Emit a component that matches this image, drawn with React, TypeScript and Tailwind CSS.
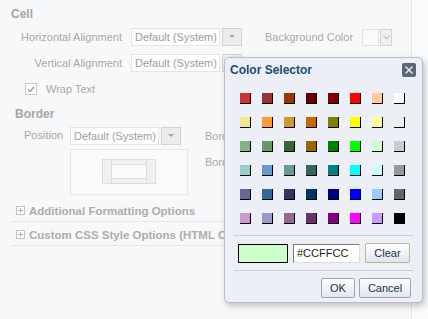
import React from 'react'

const swatches = [
  ['#cc3333', '#993333', '#993300', '#660000', '#800000', '#ff0000', '#ffcc99', '#ffffff'],
  ['#f0e68c', '#ff9933', '#cc9933', '#cc6600', '#808000', '#ffff00', '#ffff99', '#eeeeee'],
  ['#80b380', '#669966', '#336633', '#996600', '#008000', '#00ff00', '#ccffcc', '#cccccc'],
  ['#99cccc', '#6699cc', '#669999', '#336666', '#008080', '#00ffff', '#ccffff', '#999999'],
  ['#666699', '#336699', '#333366', '#003366', '#000080', '#0000ff', '#99ccff', '#666666'],
  ['#cc99cc', '#9999cc', '#996699', '#663366', '#800080', '#ff00ff', '#cc99ff', '#000000'],
]

function Select() {
  return (
    <div className="flex h-[18px] w-[111px] shrink-0">
      <div className="flex-1 border border-[#e4e4e4] bg-white px-[3px] text-[11px] leading-[16px] text-[#9c9c9c] whitespace-nowrap overflow-hidden">
        Default (System)
      </div>
      <div className="ml-[2px] flex w-[20px] items-center justify-center border border-[#d2d2d2] bg-[#ececec]">
        <svg width="6" height="4" viewBox="0 0 6 4">
          <path d="M0 0h6L3 3z" fill="#a8a8a8" />
        </svg>
      </div>
    </div>
  )
}

function Plus() {
  return (
    <div className="flex h-[9px] w-[9px] items-center justify-center border border-[#c4c4c4] bg-white">
      <svg width="5" height="5" viewBox="0 0 5 5">
        <path d="M0 2.5h5M2.5 0v5" stroke="#b0b0b0" strokeWidth="1" />
      </svg>
    </div>
  )
}

function DlgButton({ label, className }: { label: string; className: string }) {
  return (
    <button
      className={`h-[20px] rounded-[2px] border bg-gradient-to-b from-white to-[#e2e6ed] text-[11px] leading-[18px] text-[#15314f] ${className}`}
    >
      {label}
    </button>
  )
}

export default function App() {
  return (
    <div
      className="relative h-[319px] w-[428px] overflow-hidden bg-[#f9fafb]"
      style={{ fontFamily: '"Liberation Sans", Arial, sans-serif' }}
    >
      {/* faded property panel */}
      <div className="h-full w-[412px] border-r border-[#e3e5e9] bg-[#f7f8fa] pl-[11px] pt-[7px] text-[11px] text-[#a8a8a8]">
        <div className="text-[12px] font-bold leading-[14px] text-[#a6a6a6]">Cell</div>

        <div className="mt-[7px] flex items-center">
          <div className="w-[111px] text-right">Horizontal Alignment</div>
          <div className="ml-[9px]">
            <Select />
          </div>
          <div className="ml-[23px]">Background Color</div>
          <div className="ml-[9px] h-[17px] w-[17px] border border-[#e2e2e2] bg-[#fafafa]" />
          <div className="ml-[1px] flex h-[17px] w-[12px] items-center justify-center border border-[#d2d2d2] bg-[#efefef]">
            <svg width="7" height="5" viewBox="0 0 7 5">
              <path d="M0.5 0.5L3.5 4L6.5 0.5" fill="none" stroke="#aaa" />
            </svg>
          </div>
        </div>

        <div className="mt-[8px] flex items-center">
          <div className="w-[111px] text-right">Vertical Alignment</div>
          <div className="ml-[9px]">
            <Select />
          </div>
        </div>

        <div className="mt-[9px] flex items-center pl-[14px]">
          <div className="flex h-[12px] w-[12px] items-center justify-center border border-[#c9c9c9] bg-white">
            <svg width="8" height="7" viewBox="0 0 8 7">
              <path d="M1 3.5L3 5.5L7 1" fill="none" stroke="#9a9a9a" strokeWidth="1.4" />
            </svg>
          </div>
          <div className="ml-[9px]">Wrap Text</div>
        </div>

        <div className="mt-[9px] pl-[4px] text-[12px] font-bold leading-[14px] text-[#a6a6a6]">Border</div>

        <div className="mt-[6px] flex">
          <div className="flex flex-col pl-[13px]">
            <div className="flex items-center">
              <div className="w-[46px]">Position</div>
              <div>
                <Select />
              </div>
            </div>
            <div className="ml-[46px] mt-[4px] flex h-[46px] w-[118px] items-center justify-center border border-[#e6e6e6] bg-[#fafafa]">
              <svg width="54" height="25" viewBox="0 0 54 25">
                <rect x="0.5" y="0.5" width="53" height="24" fill="#f1f1f1" stroke="#dedede" />
                <rect x="9.5" y="5.5" width="35" height="14" fill="#fafafa" stroke="#dcdcdc" />
                <path d="M9.5 0.5v24M44.5 0.5v24" stroke="#dcdcdc" />
              </svg>
            </div>
          </div>
          <div className="ml-[17px] flex flex-col">
            <div className="leading-[18px]">Border Color</div>
            <div className="mt-[8px] leading-[18px]">Border Width</div>
          </div>
        </div>

        <div className="mt-[9px] flex items-center gap-[4px] border-b border-[#e6e7e9] pb-[3px] pl-[5px]">
          <Plus />
          <div className="text-[11.5px] font-bold leading-[14px] text-[#adadad]">Additional Formatting Options</div>
        </div>
        <div className="mt-[6px] flex items-center gap-[4px] border-b border-[#e6e7e9] pb-[3px] pl-[5px]">
          <Plus />
          <div className="whitespace-nowrap text-[11.5px] font-bold leading-[14px] text-[#adadad]">
            Custom CSS Style Options (HTML Output Only)
          </div>
        </div>
      </div>

      {/* Color Selector dialog overlay */}
      <div className="absolute left-[224px] top-[57px] flex h-[246px] w-[199px] flex-col rounded-[5px] border border-[#b9bdc7] bg-[#eceff6] shadow-[2px_3px_6px_rgba(0,0,0,0.22)]">
        <div className="flex h-[23px] items-center justify-between pl-[5px] pr-[6px]">
          <div className="text-[12px] font-bold text-[#1a4d77]">Color Selector</div>
          <div className="flex h-[14px] w-[14px] items-center justify-center rounded-[2px] bg-[#5d6674]">
            <svg width="10" height="10" viewBox="0 0 10 10">
              <path d="M1.5 1.5L8.5 8.5M8.5 1.5L1.5 8.5" stroke="#e4e8ee" strokeWidth="1.5" />
            </svg>
          </div>
        </div>

        <div className="ml-[15px] mt-[12px] grid grid-cols-[repeat(8,22px)] gap-y-[13px]">
          {swatches.flat().map((c, i) => (
            <div key={i} className="h-[11px] w-[11px] border-b border-r border-black" style={{ backgroundColor: c }} />
          ))}
        </div>

        <div className="mx-[9px] mt-[11px] border-t border-[#c9cdd5]" />
        <div className="ml-[13px] mt-[7px] flex items-center">
          <div className="h-[19px] w-[50px] border border-black bg-[#ccffcc]" />
          <div className="ml-[5px] h-[19px] w-[67px] border border-[#777] border-r-[#ddd] border-b-[#ddd] bg-white pl-[3px] text-[11px] leading-[17px] text-[#222]">
            #CCFFCC
          </div>
          <DlgButton label="Clear" className="ml-[5px] w-[45px] border-[#b9b996]" />
        </div>
        <div className="mx-[9px] mt-[7px] border-t border-[#c9cdd5]" />
        <div className="mr-[11px] mt-[7px] flex justify-end gap-[4px]">
          <DlgButton label="OK" className="w-[34px] border-[#9da5b1]" />
          <DlgButton label="Cancel" className="w-[52px] border-[#9da5b1]" />
        </div>
      </div>
    </div>
  )
}
